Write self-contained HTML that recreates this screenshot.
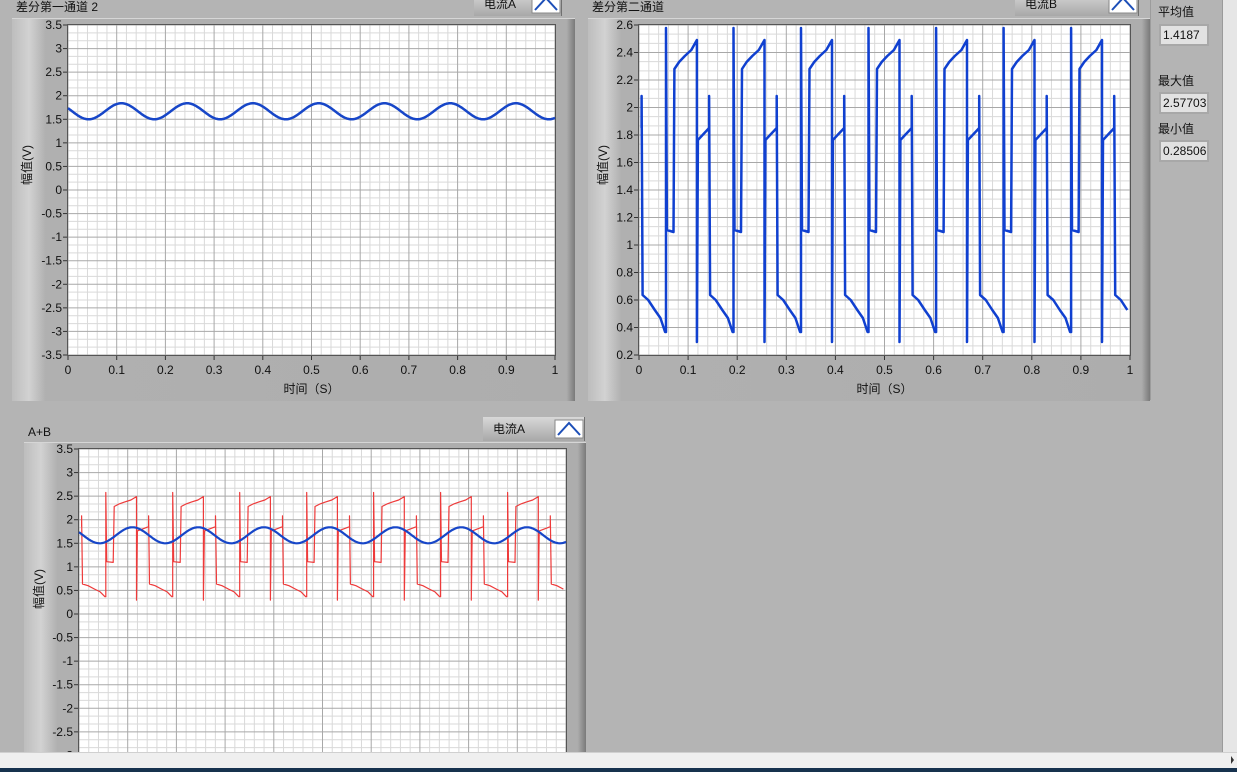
<!DOCTYPE html>
<html><head><meta charset="utf-8">
<style>
html,body{margin:0;padding:0;background:#b4b4b4;overflow:hidden;width:1237px;height:772px}
svg{display:block}
text{font-family:"Liberation Sans","Noto Sans CJK SC",sans-serif;font-size:12px;fill:#111}
</style></head><body>
<svg id="s" width="1237" height="772" xmlns="http://www.w3.org/2000/svg">
<defs>
<linearGradient id="lg" x1="0" x2="1" y1="0" y2="0">
<stop offset="0" stop-color="#bdbdbd"/><stop offset="0.03" stop-color="#d2d2d2"/><stop offset="0.06" stop-color="#b0b0b0"/><stop offset="0.985" stop-color="#adadad"/><stop offset="1" stop-color="#7a7a7a"/>
</linearGradient>
<linearGradient id="bt" x1="0" x2="0" y1="0" y2="1">
<stop offset="0" stop-color="#d8d8d8"/><stop offset="1" stop-color="#a8a8a8"/>
</linearGradient>
<clipPath id="pc"><rect x="0" y="0" width="1237" height="752"/></clipPath>
</defs>
<g id="g" clip-path="url(#pc)"></g>
<rect x="1222" y="0" width="15" height="752" fill="#e6e6e6"/>
<line x1="1222.5" y1="0" x2="1222.5" y2="752" stroke="#9a9a9a"/>
<rect x="0" y="752" width="1237" height="16" fill="#efefef"/>
<line x1="0" y1="752.5" x2="1237" y2="752.5" stroke="#d0d0d0"/>
<path d="M1231 756 L1234 760 L1231 764Z" fill="#333"/>
<rect x="0" y="768" width="1237" height="4" fill="#16324e"/>
</svg>
<script>
const g=document.getElementById('g');let h='';
function R(x,y,w,hh,f,st){h+=`<rect x="${x}" y="${y}" width="${w}" height="${hh}" fill="${f}"${st?` stroke="${st}"`:''}/>`;}
function T(x,y,t,a,extra){h+=`<text x="${x}" y="${y}" text-anchor="${a||'start'}" ${extra||''}>${t}</text>`;}
function L(x1,y1,x2,y2,c,w){h+=`<line x1="${x1}" y1="${y1}" x2="${x2}" y2="${y2}" stroke="${c}" stroke-width="${w||1}"/>`;}
function legend(x,y,w,label){
 R(x,y,w,24,'url(#bt)');L(x+w-0.5,y,x+w-0.5,y+24,'#707070');
 T(x+10,y+16,label);
 R(x+w-30,y+3,28,18,'#fff','#888');
 h+=`<path d="M${x+w-27} ${y+18} L${x+w-16} ${y+6} L${x+w-5} ${y+18}" fill="none" stroke="#1d4fb8" stroke-width="2"/>`;
}
function fmt(v){let s=(Math.round(v*10)/10).toString();return s;}
function chart(c){
 R(c.fx,c.fy,c.fw,c.fh,'url(#lg)');
 L(c.fx,c.fy+0.5,c.fx+c.fw,c.fy+0.5,'#d6d6d6');
 const p=c.p;R(p.x,p.y,p.w,p.h,'#fff');
 const ny=Math.round((c.y1-c.y0)/c.ym);
 for(let i=0;i<=ny*c.ys;i++){const y=p.y+p.h-i*p.h/(ny*c.ys);if(i%c.ys)L(p.x,y,p.x+p.w,y,'#d9d9d9');}
 for(let i=0;i<=50;i++){const x=p.x+i*p.w/50;if(i%5)L(x,p.y,x,p.y+p.h,'#d9d9d9');}
 for(let i=0;i<=ny;i++){const y=p.y+p.h-i*p.h/ny;L(p.x,y,p.x+p.w,y,'#a8a8a8');L(p.x-5,y,p.x,y,'#333');
  T(p.x-6,y+4,fmt(c.y0+i*c.ym),'end');}
 for(let i=0;i<=10;i++){const x=p.x+i*p.w/10;L(x,p.y,x,p.y+p.h,'#a8a8a8');L(x,p.y+p.h,x,p.y+p.h+5,'#333');
  T(x,p.y+p.h+19,i==0?'0':i==10?'1':'0.'+i,'middle');}
 R(p.x-0.5,p.y-0.5,p.w+1,p.h+1,'none','#555');
 T(p.x+p.w/2,p.y+p.h+38,'时间（S）','middle');
 T(0,0,'幅值(V)','middle',`transform="translate(${c.fx+19},${p.y+p.h/2-25}) rotate(-90)" font-size="11"`);
 c.sx=t=>p.x+t*p.w; c.sy=v=>p.y+p.h-(v-c.y0)/(c.y1-c.y0)*p.h;
}
function sine(t){return 1.67+0.17*Math.sin(2*Math.PI*(t-0.076)/0.135);}
// square-ish pattern in px (period 72) -> volts
const pat=[[0,332],[0,28],[1,230],[8,232],[9,69],[14,62],[20,56],[27,50],[33,40],[33,342],[34,140],[40,134],[46,128],[46,96],[47,295],[53,300],[60,310],[66,318],[71,332]];
function sq(){const pts=[];const P=0.1375;for(let k=-1;k<8;k++){const s=0.055+k*P;for(const [u,y] of pat){const t=s+u/72*P;pts.push([t,0.2+(355-y)/137.5]);}}return pts;}
function path(c,pts,col,w){let d='';let first=true;for(const [t,v] of pts){if(t<0||t>1)continue;d+=(first?'M':'L')+c.sx(t).toFixed(1)+' '+c.sy(v).toFixed(1)+' ';first=false;}
 h+=`<path d="${d}" fill="none" stroke="${col}" stroke-width="${w}" stroke-linejoin="round"/>`;}
const sp=[];for(let i=0;i<=500;i++){const t=i/500;sp.push([t,sine(t)]);}
const q=sq();
const c1={fx:12,fy:18,fw:563,fh:383,p:{x:68,y:25,w:487,h:330},y0:-3.5,y1:3.5,ym:0.5,ys:3};
const c2={fx:588,fy:18,fw:562,fh:383,p:{x:639,y:25,w:491,h:330},y0:0.2,y1:2.6,ym:0.2,ys:3};
const c3={fx:24,fy:442,fw:562,fh:383,p:{x:79,y:449,w:487,h:330},y0:-3.5,y1:3.5,ym:0.5,ys:3};
chart(c1);path(c1,sp,'#1746c8',2.5);
chart(c2);path(c2,q,'#1040d0',2.5);
chart(c3);path(c3,q,'#ee3a3a',1.2);path(c3,sp,'#1746c8',2.2);
T(16,11,'差分第一通道 2');T(592,11,'差分第二通道');T(28,436,'A+B');
legend(474,-8,88,'电流A');legend(1015,-8,124,'电流B');legend(483,417,102,'电流A');
// indicators
function ind(x,y,lab,val,ly){T(x,ly,lab);R(x+1,y,50,22,'#a8a8a8');R(x+3,y+2,46,18,'#e2e2e2');T(x+5,y+15,val);}
ind(1158,24,'平均值','1.4187',16);ind(1158,92,'最大值','2.57703',85);ind(1158,140,'最小值','0.28506',133);
L(1150.5,0,1150.5,400,'#9c9c9c');
g.innerHTML=h;
</script>
</body></html>
